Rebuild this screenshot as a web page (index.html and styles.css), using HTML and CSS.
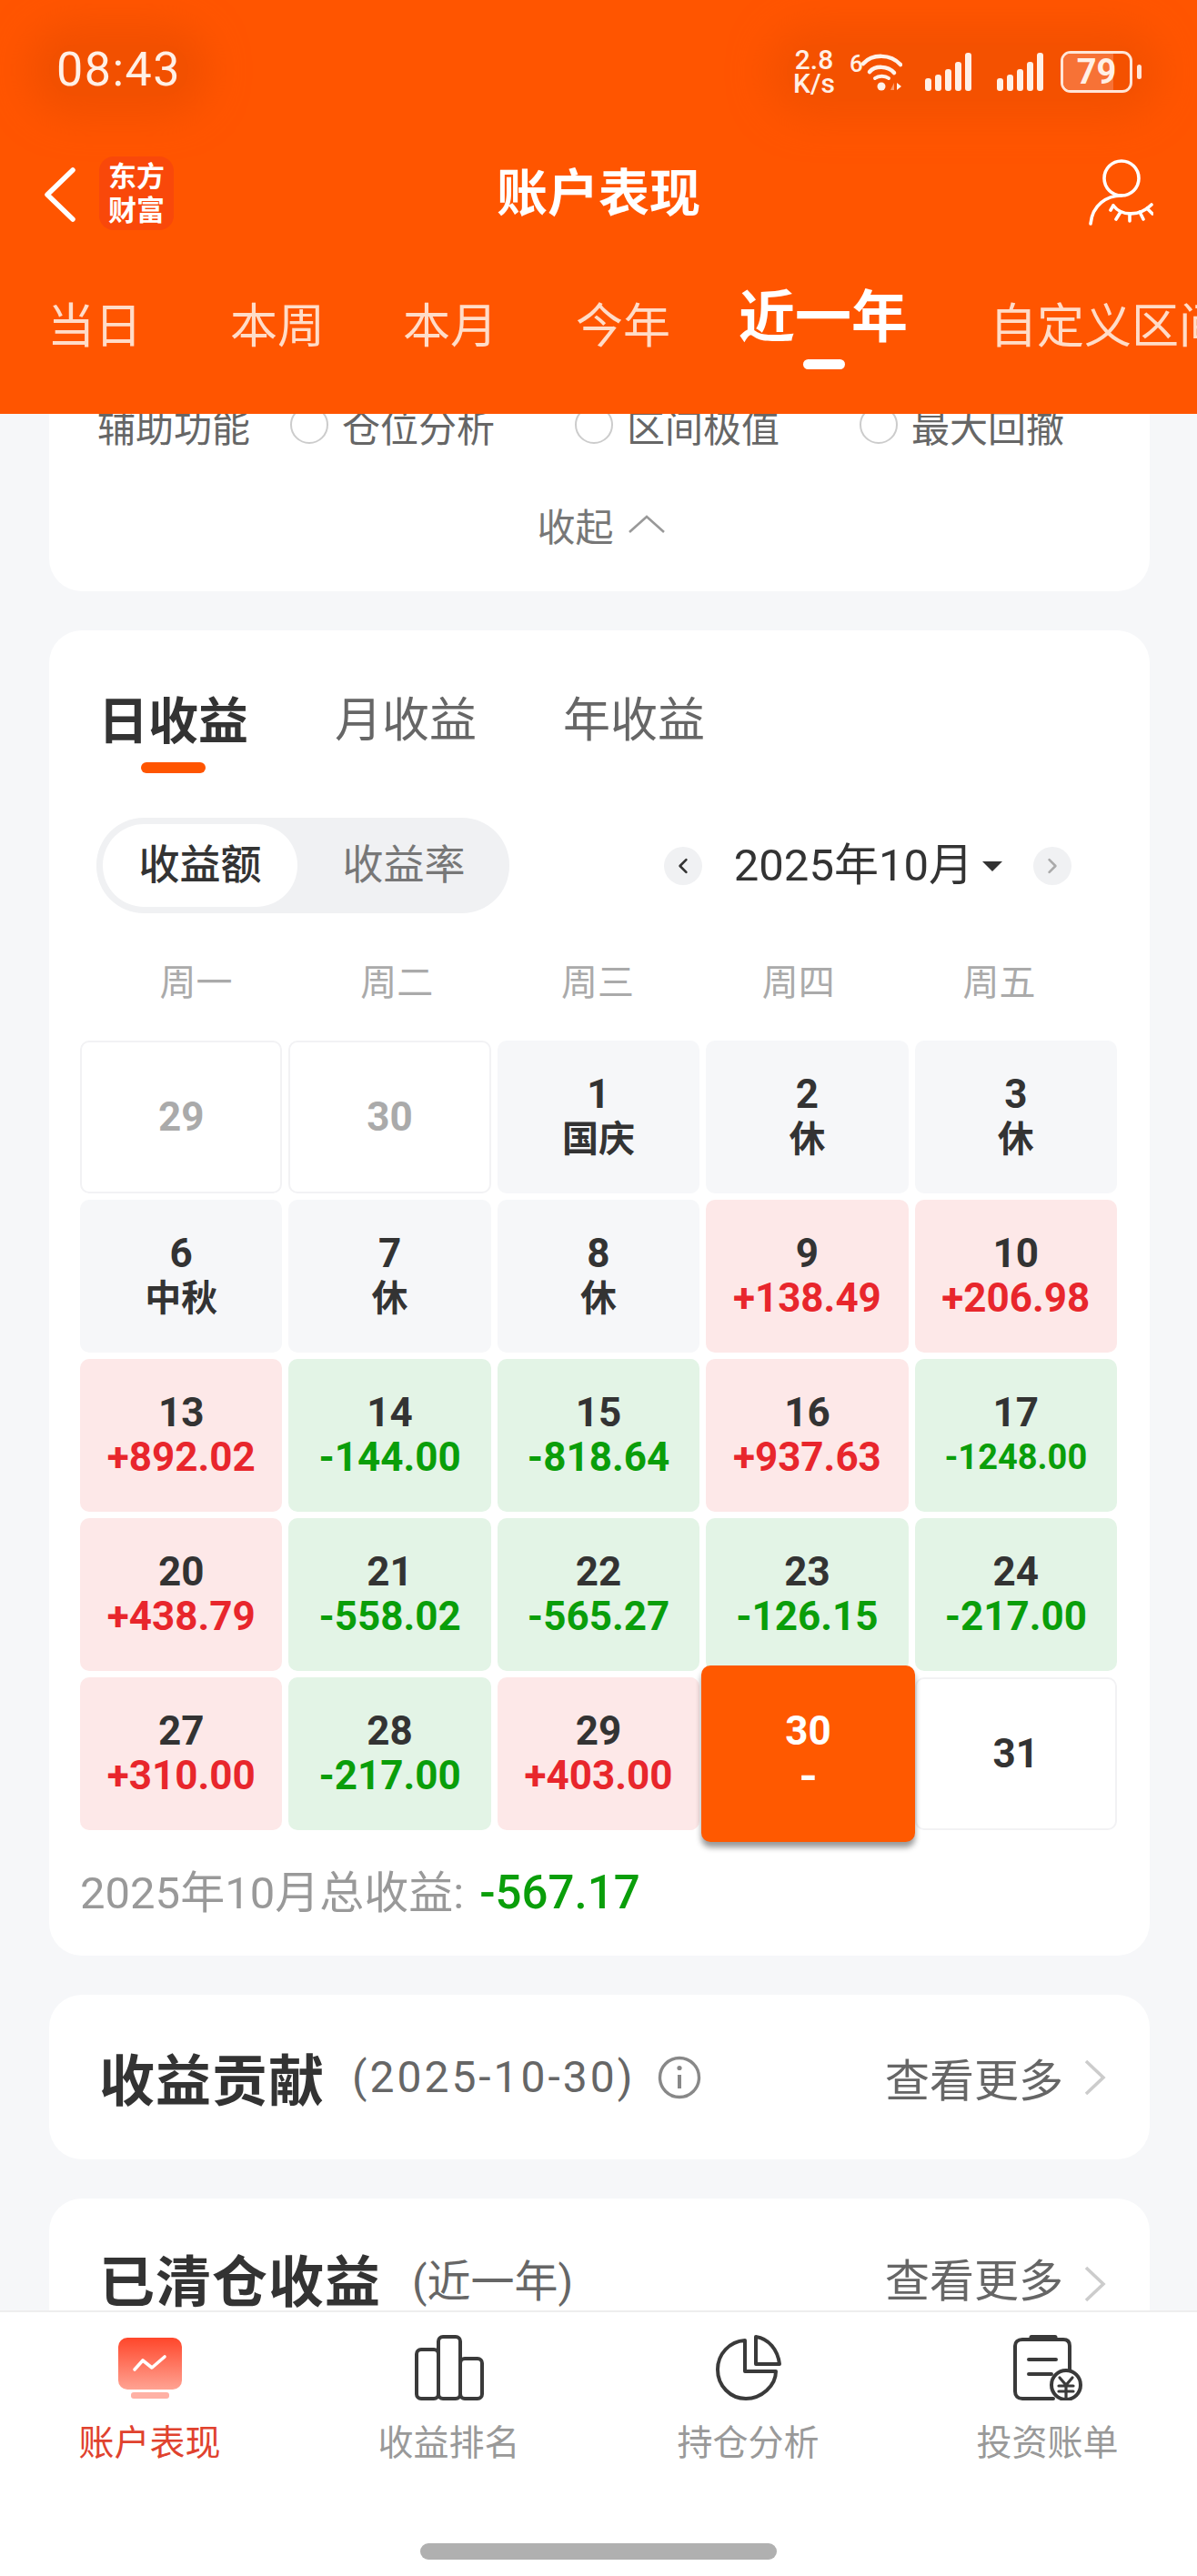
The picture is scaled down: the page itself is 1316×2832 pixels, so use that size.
FILE: index.html
```html
<!DOCTYPE html>
<html lang="zh-CN">
<head>
    <meta charset="UTF-8">
    <meta name="viewport" content="width=device-width, initial-scale=1.0">
    <title>账户表现</title>
    <link rel="stylesheet" href="styles.css">
</head>
<body>
<div class="page">

    <!-- Orange top area: status bar, title, period tabs -->
    <header class="topArea">
        <div class="statusBar">
            <span class="clock">08:43</span>
            <div class="statusIcons">
                <span class="netSpeed"><b>2.8</b><b>K/s</b></span>
                <span class="wifiSix">6</span>
                <svg class="wifiIcon" viewBox="0 0 45 42" fill="none" stroke="#fff2ea" stroke-linecap="round">
                    <path d="M2 12 C12 1 32 1 43 13" stroke-width="4.5"/>
                    <path d="M9 21 C15 14 29 14 36 22" stroke-width="4.5"/>
                    <path d="M15 28 C19 25 26 25 30 28" stroke-width="4"/>
                    <circle cx="22" cy="37" r="4.5" fill="#fff2ea" stroke="none"/>
                    <path d="M32 41 L36 33 L36 41 Z" fill="#ff9a66" stroke="none"/>
                    <path d="M39 33 L44 37 L39 41 Z" fill="#fff2ea" stroke="none"/>
                </svg>
                <span class="signal"><i></i><i></i><i></i><i></i><i></i></span>
                <span class="signal second"><i></i><i></i><i></i><i></i><i></i></span>
                <span class="battery"><span class="batteryLevel"></span><span class="batteryText">79</span></span>
                <span class="batteryNub"></span>
            </div>
        </div>

        <div class="titleBar">
            <svg class="backIcon" viewBox="0 0 36 60" fill="none" stroke="#fff" stroke-width="5.5" stroke-linecap="round" stroke-linejoin="round">
                <path d="M32 3 L4 30 L32 57"/>
            </svg>
            <div class="logo">东方<br>财富</div>
            <h1 class="pageTitle">账户表现</h1>
            <svg class="userIcon" viewBox="0 0 71 73" fill="none" stroke="#fff" stroke-width="3.6" stroke-linecap="round">
                <circle cx="36" cy="21" r="19"/>
                <path d="M36 40 C20 40 4 50 2 71"/>
                <path d="M27 51 C36 63 56 63 69 50"/>
                <path d="M27 51 L24 56 M35 58 L30 66 M45 60 L45 68 M56 58 L60 66 M64 54 L70 60"/>
            </svg>
        </div>

        <nav class="periodTabs">
            <span class="periodTab first">当日</span>
            <span class="periodTab">本周</span>
            <span class="periodTab">本月</span>
            <span class="periodTab">今年</span>
            <span class="periodTab active">近一年</span>
            <span class="periodTab">自定义区间</span>
        </nav>
    </header>

    <main class="scrollArea">

        <!-- Options card, scrolled partly under the header -->
        <section class="card foldCard">
            <div class="toolRow">
                <span class="toolLabel">辅助功能</span>
                <span class="toolOption"><i class="radio"></i>仓位分析</span>
                <span class="toolOption"><i class="radio"></i>区间极值</span>
                <span class="toolOption"><i class="radio"></i>最大回撤</span>
            </div>
            <div class="foldRow">
                收起
                <svg class="foldIcon" viewBox="0 0 40 22" fill="none" stroke="#999" stroke-width="2.6"><path d="M1 20 L20 3 L39 20"/></svg>
            </div>
        </section>

        <!-- Daily earnings calendar -->
        <section class="card calendarCard">
            <div class="earnTabs">
                <span class="earnTab active">日收益</span>
                <span class="earnTab">月收益</span>
                <span class="earnTab">年收益</span>
            </div>

            <div class="controlRow">
                <div class="toggle">
                    <span class="toggleItem active">收益额</span>
                    <span class="toggleItem">收益率</span>
                </div>
                <div class="monthPicker">
                    <span class="monthBtn">
                        <svg viewBox="0 0 14 20" fill="none" stroke="#333" stroke-width="3" stroke-linecap="round" stroke-linejoin="round"><path d="M11 2 L3 10 L11 18"/></svg>
                    </span>
                    <span class="monthText">2025年10月</span>
                    <span class="monthCaret"></span>
                    <span class="monthBtn">
                        <svg viewBox="0 0 14 20" fill="none" stroke="#aaa" stroke-width="3" stroke-linecap="round" stroke-linejoin="round"><path d="M3 2 L11 10 L3 18"/></svg>
                    </span>
                </div>
            </div>

            <div class="weekdays">
                <span>周一</span><span>周二</span><span>周三</span><span>周四</span><span>周五</span>
            </div>

            <div class="dayGrid">
                <div class="day past"><b>29</b></div>
                <div class="day past"><b>30</b></div>
                <div class="day rest"><b>1</b><b>国庆</b></div>
                <div class="day rest"><b>2</b><b>休</b></div>
                <div class="day rest"><b>3</b><b>休</b></div>

                <div class="day rest"><b>6</b><b>中秋</b></div>
                <div class="day rest"><b>7</b><b>休</b></div>
                <div class="day rest"><b>8</b><b>休</b></div>
                <div class="day up"><b>9</b><b>+138.49</b></div>
                <div class="day up"><b>10</b><b>+206.98</b></div>

                <div class="day up"><b>13</b><b>+892.02</b></div>
                <div class="day down"><b>14</b><b>-144.00</b></div>
                <div class="day down"><b>15</b><b>-818.64</b></div>
                <div class="day up"><b>16</b><b>+937.63</b></div>
                <div class="day down small"><b>17</b><b>-1248.00</b></div>

                <div class="day up"><b>20</b><b>+438.79</b></div>
                <div class="day down"><b>21</b><b>-558.02</b></div>
                <div class="day down"><b>22</b><b>-565.27</b></div>
                <div class="day down"><b>23</b><b>-126.15</b></div>
                <div class="day down"><b>24</b><b>-217.00</b></div>

                <div class="day up"><b>27</b><b>+310.00</b></div>
                <div class="day down"><b>28</b><b>-217.00</b></div>
                <div class="day up"><b>29</b><b>+403.00</b></div>
                <div class="day today"><b>30</b><b>-</b></div>
                <div class="day future"><b>31</b></div>
            </div>

            <div class="monthTotal">2025年10月总收益: <span class="totalValue">-567.17</span></div>
        </section>

        <section class="card linkCard">
            <h2 class="linkTitle">收益贡献</h2>
            <span class="linkNote">(2025-10-30)</span>
            <svg class="infoIcon" viewBox="0 0 48 48" fill="none" stroke="#888" stroke-width="3.4">
                <circle cx="24" cy="24" r="21.5"/>
                <path d="M24 21 V36" stroke-width="4"/>
                <circle cx="24" cy="13.5" r="2.6" fill="#888" stroke="none"/>
            </svg>
            <span class="moreLink">查看更多</span>
            <svg class="moreIcon" viewBox="0 0 24 40" fill="none" stroke="#ccc" stroke-width="3.6"><path d="M2 2 L21 20 L2 38"/></svg>
        </section>

        <section class="card linkCard clearedCard">
            <h2 class="linkTitle">已清仓收益</h2>
            <span class="linkNote">(近一年)</span>
            <span class="moreLink">查看更多</span>
            <svg class="moreIcon" viewBox="0 0 24 40" fill="none" stroke="#ccc" stroke-width="3.6"><path d="M2 2 L21 20 L2 38"/></svg>
        </section>
    </main>

    <!-- Bottom navigation -->
    <footer class="bottomNav">
        <div class="navItems">
            <div class="navItem active">
                <svg class="navIcon" viewBox="0 0 72 72">
                    <defs>
                        <linearGradient id="screenFill" x1="0" y1="0" x2="0" y2="1">
                            <stop offset="0" stop-color="#ff462a"/>
                            <stop offset="1" stop-color="#ffa393"/>
                        </linearGradient>
                    </defs>
                    <rect x="1" y="3" width="70" height="57" rx="10" fill="url(#screenFill)"/>
                    <rect x="15" y="63" width="42" height="7" rx="3" fill="#ffb1a5"/>
                    <path d="M19 38 L28 28 L38 36 L52 24" fill="none" stroke="#fff" stroke-width="3.6" stroke-linecap="round" stroke-linejoin="round"/>
                </svg>
                <span>账户表现</span>
            </div>
            <div class="navItem">
                <svg class="navIcon" viewBox="0 0 76 72" fill="none" stroke="#3a3a3a" stroke-width="4" stroke-linejoin="round">
                    <rect x="2" y="16" width="24" height="54" rx="5"/>
                    <rect x="26" y="2" width="24" height="68" rx="5"/>
                    <rect x="50" y="26" width="24" height="44" rx="5"/>
                </svg>
                <span>收益排名</span>
            </div>
            <div class="navItem">
                <svg class="navIcon" viewBox="0 0 72 72" fill="none" stroke="#3a3a3a" stroke-width="4" stroke-linejoin="round">
                    <path d="M32 6 C15 7 2 21 2 38 C2 56 16 70 33 70 C50 70 66 56 66 40 H32 Z"/>
                    <path d="M44 2 C58 4 68 16 70 32 H44 Z"/>
                </svg>
                <span>持仓分析</span>
            </div>
            <div class="navItem">
                <svg class="navIcon" viewBox="0 0 76 72" fill="none" stroke="#3a3a3a" stroke-width="4" stroke-linecap="round">
                    <path d="M62 42 V12 C62 7 59 5 55 5 H10 C5 5 2 8 2 12 V62 C2 67 5 70 10 70 H44"/>
                    <path d="M20 2.5 H46" stroke-width="5"/>
                    <path d="M17 27 H47 M17 43 H42"/>
                    <circle cx="58" cy="55" r="16" fill="#fff"/>
                    <path d="M51 47 L58 55 L65 47 M50 56 H66 M50 62 H66 M58 55 V69" stroke-width="3.2"/>
                </svg>
                <span>投资账单</span>
            </div>
        </div>
        <div class="homeBar"></div>
    </footer>
</div>
</body>
</html>
```

FILE: styles.css
```css
* {
    box-sizing: border-box;
}

body {
    margin: 0;
    font-family: Roboto, "Noto Sans CJK SC", sans-serif;
    color: #333;
    background-color: #f6f7f9;
}

.page {
    width: 1316px;
    height: 2832px;
    display: flex;
    flex-direction: column;
    overflow: hidden;
}

/* top area */
.topArea {
    height: 455px;
    flex: none;
    background-color: #ff5500;
    color: #fff;
    position: relative;
    z-index: 2;
}

.statusBar {
    height: 160px;
    padding: 49px 61px 0 54px;
    display: flex;
    justify-content: space-between;
    align-items: flex-start;
}

.clock {
    font-size: 52px;
    line-height: 56px;
    letter-spacing: 1.5px;
    color: #fff0e6;
    padding: 0 8px;
    background-color: #f25000;
    box-shadow: 0 0 40px 24px #f25000;
    border-radius: 30px;
}

.statusIcons {
    display: flex;
    align-items: center;
    height: 60px;
    background-color: #f45100;
    box-shadow: 0 0 40px 22px #f45100;
    border-radius: 30px;
}

.netSpeed {
    display: flex;
    flex-direction: column;
    width: 60px;
    margin-right: 9px;
    color: #fff0e6;
    align-items: center;
}

.netSpeed b {
    font-size: 30px;
    line-height: 26px;
    font-weight: 500;
}

.wifiSix {
    font-size: 26px;
    font-weight: 500;
    color: #fff0e6;
    margin-top: -18px;
    width: 13px;
}

.wifiIcon {
    width: 45px;
    height: 42px;
}

.signal {
    display: flex;
    align-items: flex-end;
    gap: 4px;
    height: 42px;
    margin-left: 25px;
}

.signal.second {
    margin-left: 28px;
}

.signal i {
    width: 7px;
    background-color: #fff0e6;
    border-radius: 3px;
}

.signal i:nth-child(1) { height: 14px; }
.signal i:nth-child(2) { height: 18px; }
.signal i:nth-child(3) { height: 24px; }
.signal i:nth-child(4) { height: 32px; }
.signal i:nth-child(5) { height: 42px; }

.battery {
    width: 79px;
    height: 46px;
    margin-left: 19px;
    border: 3px solid #ffe6d8;
    border-radius: 11px;
    position: relative;
    overflow: hidden;
    display: flex;
    align-items: center;
    justify-content: center;
}

.batteryLevel {
    position: absolute;
    left: 0;
    top: 0;
    bottom: 0;
    width: 76%;
    background-color: #f77236;
}

.batteryText {
    position: relative;
    font-size: 38px;
    font-weight: 700;
    color: #fff0e6;
    line-height: 40px;
}

.batteryNub {
    width: 5px;
    height: 16px;
    margin-left: 5px;
    background-color: #ffe6d8;
    border-radius: 3px;
}

.titleBar {
    height: 110px;
    padding: 12px 48px 0 48px;
    display: flex;
    align-items: flex-start;
    position: relative;
}

.backIcon {
    width: 36px;
    height: 60px;
    margin-top: 12px;
}

.logo {
    width: 82px;
    height: 81px;
    margin-left: 25px;
    background-color: #f9480a;
    border-radius: 16px;
    font-size: 31px;
    font-weight: 700;
    line-height: 37px;
    text-align: center;
    padding-top: 4px;
}

.pageTitle {
    position: absolute;
    left: 0;
    right: 0;
    top: 15px;
    margin: 0;
    text-align: center;
    font-size: 56px;
    line-height: 76px;
    font-weight: 700;
}

.userIcon {
    width: 71px;
    height: 73px;
    margin-left: auto;
    margin-top: 3px;
}

.periodTabs {
    height: 185px;
    padding-left: 52px;
    display: flex;
    gap: 86px;
    white-space: nowrap;
    overflow: hidden;
}

.periodTab {
    font-size: 52px;
    line-height: 70px;
    margin-top: 55px;
    color: #ffdcc8;
}

.periodTab.first {
    margin-right: 11px;
}

.periodTab.active {
    font-size: 62px;
    line-height: 80px;
    margin-top: 40px;
    margin-left: -11px;
    margin-right: 4px;
    font-weight: 700;
    color: #fff;
    position: relative;
}

.periodTab.active::after {
    content: "";
    position: absolute;
    left: 71px;
    top: 85px;
    width: 46px;
    height: 11px;
    border-radius: 6px;
    background-color: #fff;
}

/* scrolling content */
.scrollArea {
    flex: 1;
    min-height: 0;
    overflow: hidden;
    padding: 0 52px 0 54px;
}

.card {
    background-color: #fff;
    border-radius: 36px;
    margin-bottom: 43px;
}

.foldCard {
    height: 195px;
    border-radius: 0 0 36px 36px;
    display: flex;
    flex-direction: column;
}

.toolRow {
    display: flex;
    align-items: center;
    height: 60px;
    margin-top: -18px;
    padding-left: 53px;
    font-size: 42px;
    color: #666;
}

.toolLabel {
    width: 212px;
}

.toolOption {
    width: 313px;
    display: flex;
    align-items: center;
    gap: 15px;
}

.radio {
    width: 42px;
    height: 42px;
    border: 2.5px solid #ccc;
    border-radius: 50%;
}

.foldRow {
    display: flex;
    justify-content: center;
    align-items: center;
    gap: 16px;
    height: 60px;
    margin-top: 49px;
    padding-left: 3px;
    font-size: 42px;
    color: #777;
}

.foldIcon {
    width: 40px;
    height: 22px;
}

/* calendar card */
.calendarCard {
    height: 1457px;
    padding: 62px 34px 0 34px;
}

.earnTabs {
    display: flex;
    gap: 95px;
    padding-left: 20px;
    height: 83px;
}

.earnTab {
    font-size: 52px;
    line-height: 76px;
    color: #666;
    position: relative;
}

.earnTab.active {
    font-size: 55px;
    font-weight: 700;
    color: #333;
}

.earnTab.active::after {
    content: "";
    position: absolute;
    left: 47px;
    top: 83px;
    width: 71px;
    height: 12px;
    border-radius: 6px;
    background-color: #ff5500;
}

.controlRow {
    display: flex;
    justify-content: space-between;
    align-items: center;
    margin-top: 61px;
    padding: 0 52px 0 18px;
}

.toggle {
    width: 454px;
    height: 105px;
    padding: 7px;
    display: flex;
    background-color: #f0f1f3;
    border-radius: 52px;
}

.toggleItem {
    width: 214px;
    font-size: 45px;
    line-height: 91px;
    text-align: center;
    color: #777;
}

.toggleItem.active {
    background-color: #fff;
    border-radius: 46px;
    color: #333;
    font-weight: 500;
}

.toggleItem:last-child {
    width: 212px;
    padding-left: 22px;
}

.monthPicker {
    display: flex;
    align-items: center;
}

.monthBtn {
    width: 42px;
    height: 42px;
    border-radius: 50%;
    background-color: #f0f1f3;
    display: flex;
    align-items: center;
    justify-content: center;
}

.monthBtn svg {
    width: 12px;
    height: 18px;
}

.monthText {
    font-size: 49px;
    margin-left: 35px;
    line-height: 60px;
    color: #333;
}

.monthCaret {
    width: 0;
    height: 0;
    margin: 2px 34px 0 10px;
    border-left: 11px solid transparent;
    border-right: 11px solid transparent;
    border-top: 11px solid #333;
}

.weekdays {
    display: grid;
    grid-template-columns: repeat(5, 1fr);
    width: 1104px;
    margin: 46px 0 0 17px;
    height: 62px;
    font-size: 40px;
    line-height: 62px;
    text-align: center;
    color: #aaa;
}

.dayGrid {
    display: grid;
    grid-template-columns: repeat(5, 1fr);
    grid-auto-rows: 168px;
    gap: 7px;
    width: 1140px;
    margin: 32px 0 0 0;
}

.day {
    border-radius: 10px;
    display: flex;
    flex-direction: column;
    align-items: center;
    justify-content: center;
    font-size: 44px;
    line-height: 49px;
    color: #333;
}

.day b:nth-child(2) {
    font-size: 44px;
}

.past,
.future {
    background-color: #fff;
    border: 2px solid #f2f2f4;
}

.past {
    color: #aaa;
}

.rest {
    background-color: #f6f7f9;
}

.rest b:nth-child(2) {
    font-size: 40px;
}

.up {
    background-color: #fde8e8;
}

.up b:nth-child(2) {
    color: #e8262c;
}

.down {
    background-color: #e3f4e6;
}

.down b:nth-child(2) {
    color: #0a9e0a;
}

.down.small b:nth-child(2) {
    font-size: 38px;
}

.today {
    background-color: #ff5900;
    color: #fff;
    margin: -13px -7px -13px -5px;
    position: relative;
    box-shadow: 0 6px 6px rgba(0, 0, 0, 0.4);
}

.today b:nth-child(2) {
    font-size: 56px;
    font-weight: 500;
}

.monthTotal {
    margin-top: 37px;
    font-size: 49px;
    line-height: 64px;
    color: #999;
}

.totalValue {
    margin-left: 5px;
    font-size: 51px;
    font-weight: 500;
    color: #0a9e0a;
}

/* link cards */
.linkCard {
    height: 181px;
    padding: 0 48px 0 55px;
    display: flex;
    align-items: center;
}

.linkTitle {
    margin: 0;
    font-size: 61px;
    font-weight: 700;
    color: #333;
    letter-spacing: 1px;
}

.linkNote {
    margin-left: 30px;
    font-size: 48px;
    letter-spacing: 3px;
    color: #666;
}

.infoIcon {
    width: 48px;
    height: 48px;
    margin-left: 24px;
}

.moreLink {
    margin-left: auto;
    font-size: 49px;
    color: #666;
}

.moreIcon {
    width: 24px;
    height: 40px;
    margin-left: 23px;
}

.clearedCard {
    height: 240px;
    align-items: flex-start;
    padding-top: 50px;
}

.clearedCard .linkTitle {
    margin-top: -7px;
}

.clearedCard .moreIcon {
    margin-top: 24px;
}

.clearedCard .linkNote {
    margin-left: 34px;
    line-height: 84px;
    letter-spacing: 0;
}

.clearedCard .moreLink {
    line-height: 84px;
}

/* bottom navigation */
.bottomNav {
    height: 292px;
    flex: none;
    background-color: #fff;
    border-top: 2px solid #eeeeee;
    position: relative;
    z-index: 2;
}

.navItems {
    display: grid;
    grid-template-columns: repeat(4, 329px);
}

.navItem {
    display: flex;
    flex-direction: column;
    align-items: center;
    padding-top: 25px;
    font-size: 39px;
    line-height: 56px;
    color: #999;
}

.navItem.active {
    color: #e0422e;
}

.navIcon {
    width: 76px;
    height: 72px;
    margin-bottom: 19px;
}

.homeBar {
    width: 392px;
    height: 18px;
    margin: 82px auto 0;
    border-radius: 9px;
    background-color: #b0b0b0;
}
```
